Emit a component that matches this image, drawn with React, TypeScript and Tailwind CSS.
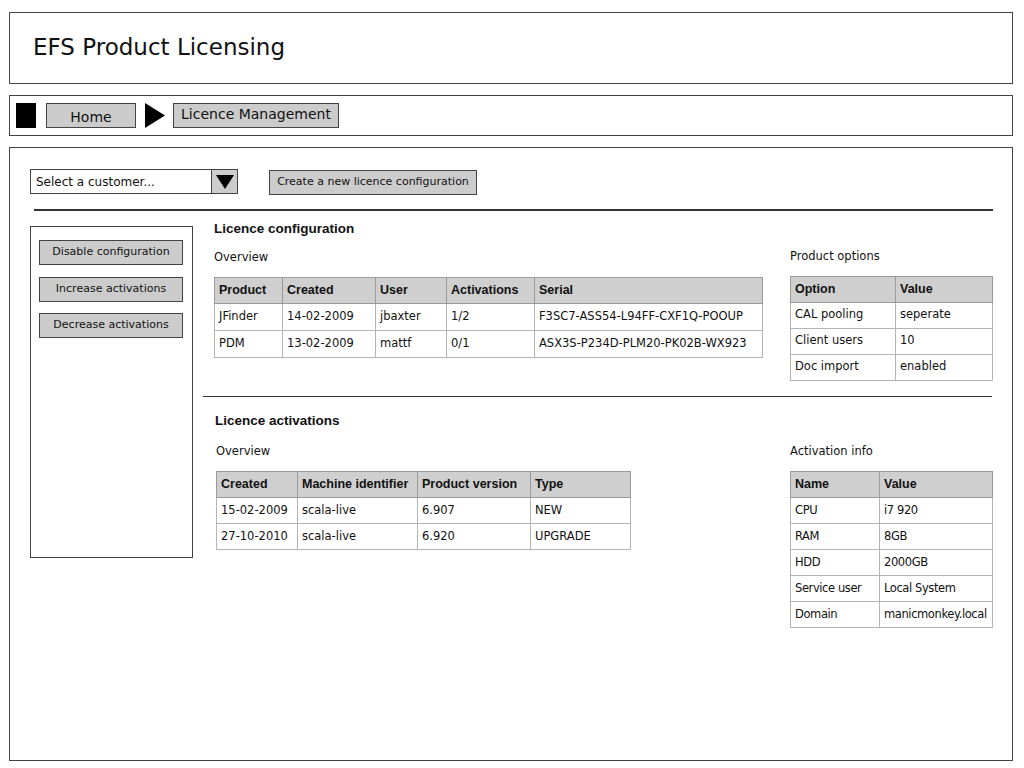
import React from "react";

const font = { fontFamily: '"DejaVu Sans", "Liberation Sans", sans-serif' };
const boldFont = { fontFamily: '"Liberation Sans", Arial, sans-serif' };

type TableProps = {
  widths: number[];
  header: string[];
  rows: string[][];
  headH?: number;
  rowH?: number;
  tight?: boolean;
};

function DataTable({ widths, header, rows, headH = 26, rowH = 26, tight = false }: TableProps) {
  return (
    <table className="border-collapse table-fixed text-[11.5px] text-[#111]" style={{ width: widths.reduce((a, b) => a + b, 0) }}>
      <colgroup>
        {widths.map((w, i) => (
          <col key={i} style={{ width: w }} />
        ))}
      </colgroup>
      <thead>
        <tr style={{ height: headH }} className="bg-[#cfcfcf]">
          {header.map((h, i) => (
            <th
              key={i}
              style={boldFont}
              className="border border-[#9a9a9a] text-left font-bold text-[12.5px] px-[4px] py-0 whitespace-nowrap"
            >
              {h}
            </th>
          ))}
        </tr>
      </thead>
      <tbody>
        {rows.map((r, ri) => (
          <tr key={ri} style={{ height: rowH }}>
            {r.map((c, ci) => (
              <td
                key={ci}
                className={`border border-[#b4b4b4] px-[4px] py-0 whitespace-nowrap ${tight ? "tracking-[-0.4px]" : ""}`}
              >
                {c}
              </td>
            ))}
          </tr>
        ))}
      </tbody>
    </table>
  );
}

function GrayButton({ children, className = "" }: { children: React.ReactNode; className?: string }) {
  return (
    <div className={`bg-[#cccccc] border-[1.5px] border-[#444] flex items-center justify-center text-[11px] text-[#111] whitespace-nowrap ${className}`}>
      {children}
    </div>
  );
}

export default function App() {
  return (
    <div className="w-[1024px] h-[768px] bg-white overflow-hidden text-[#111]" style={font}>
      <div className="flex flex-col pt-[12px] pl-[9px]">
        {/* Header */}
        <div className="w-[1004px] h-[72px] border-[1.5px] border-[#444] flex items-center pl-[23px]">
          <span className="text-[23px] leading-none pb-[1px]">EFS Product Licensing</span>
        </div>

        {/* Breadcrumb */}
        <div className="mt-[11px] w-[1004px] h-[41px] border-[1.5px] border-[#444] flex items-center pl-[6px]">
          <div className="w-[20px] h-[25px] bg-black" />
          <GrayButton className="ml-[10px] w-[90px] h-[25px] text-[14px] pt-[3px]">Home</GrayButton>
          <svg width="20" height="25" viewBox="0 0 20 25" className="ml-[9px]">
            <polygon points="0,0 20,12.5 0,25" fill="#000" />
          </svg>
          <GrayButton className="ml-[8px] w-[166px] h-[25px] text-[14px] items-start pb-[4px]">Licence Management</GrayButton>
        </div>

        {/* Main */}
        <div className="mt-[11px] w-[1004px] h-[614px] border-[1.5px] border-[#444] flex flex-col">
          {/* Top controls */}
          <div className="flex items-start mt-[21px] ml-[20px]">
            <div className="w-[208px] h-[25px] border-[1.5px] border-[#444] flex items-stretch">
              <div className="flex-1 flex items-center pl-[5px] text-[12px]">Select a customer...</div>
              <div className="w-[26px] bg-[#cccccc] border-l-[1.5px] border-[#444] flex items-center justify-center">
                <svg width="18" height="14" viewBox="0 0 18 14">
                  <polygon points="0,0 18,0 9,14" fill="#000" />
                </svg>
              </div>
            </div>
            <GrayButton className="ml-[31px] mt-[1px] w-[208px] h-[25px]">Create a new licence configuration</GrayButton>
          </div>

          {/* Divider */}
          <div className="ml-[24px] mt-[14px] w-[959px] h-[1.5px] bg-[#333]" />

          {/* Lower area */}
          <div className="flex items-start">
            {/* Left panel */}
            <div className="ml-[20px] mt-[15px] w-[163px] h-[332px] border-[1.5px] border-[#444] flex flex-col pl-[8px] pt-[13px]">
              <GrayButton className="w-[144px] h-[25px]">Disable configuration</GrayButton>
              <GrayButton className="w-[144px] h-[25px] mt-[12px]">Increase activations</GrayButton>
              <GrayButton className="w-[144px] h-[25px] mt-[11px]">Decrease activations</GrayButton>
            </div>

            {/* Right content */}
            <div className="ml-[10px] w-[790px] flex flex-col">
              {/* Licence configuration */}
              <div className="flex pl-[11px] pt-[9px]">
                <div className="flex flex-col">
                  <div style={boldFont} className="text-[13.5px] font-bold h-[18px] leading-[18px]">Licence configuration</div>
                  <div className="text-[11.5px] mt-[11px] h-[16px] leading-[16px]">Overview</div>
                  <div className="mt-[12px]">
                    <DataTable
                      widths={[68, 93, 71, 88, 228]}
                      header={["Product", "Created", "User", "Activations", "Serial"]}
                      rows={[
                        ["JFinder", "14-02-2009", "jbaxter", "1/2", "F3SC7-ASS54-L94FF-CXF1Q-POOUP"],
                        ["PDM", "13-02-2009", "mattf", "0/1", "ASX3S-P234D-PLM20-PK02B-WX923"],
                      ]}
                      rowH={27}
                    />
                  </div>
                </div>
                <div className="flex flex-col ml-[27px] pt-[28px]">
                  <div className="text-[11.5px] h-[16px] leading-[16px]">Product options</div>
                  <div className="mt-[12px]">
                    <DataTable
                      widths={[105, 97]}
                      header={["Option", "Value"]}
                      rows={[
                        ["CAL pooling", "seperate"],
                        ["Client users", "10"],
                        ["Doc import", "enabled"],
                      ]}
                    />
                  </div>
                </div>
              </div>

              {/* Divider 2 */}
              <div className="mt-[15px] w-[789px] h-[1.5px] bg-[#333]" />

              {/* Licence activations */}
              <div className="flex pl-[12px] pt-[15px]">
                <div className="flex flex-col w-[574px]">
                  <div style={boldFont} className="text-[13.5px] font-bold h-[18px] leading-[18px]">Licence activations</div>
                  <div className="text-[11.5px] mt-[13px] h-[16px] leading-[16px] pl-[1px]">Overview</div>
                  <div className="mt-[12px] pl-[1px]">
                    <DataTable
                      widths={[81, 120, 113, 100]}
                      header={["Created", "Machine identifier", "Product version", "Type"]}
                      rows={[
                        ["15-02-2009", "scala-live", "6.907", "NEW"],
                        ["27-10-2010", "scala-live", "6.920", "UPGRADE"],
                      ]}
                    />
                  </div>
                </div>
                <div className="flex flex-col pt-[31px] ml-[1px]">
                  <div className="text-[11.5px] h-[16px] leading-[16px]">Activation info</div>
                  <div className="mt-[12px]">
                    <DataTable
                      widths={[89, 113]}
                      header={["Name", "Value"]}
                      tight
                      rows={[
                        ["CPU", "i7 920"],
                        ["RAM", "8GB"],
                        ["HDD", "2000GB"],
                        ["Service user", "Local System"],
                        ["Domain", "manicmonkey.local"],
                      ]}
                    />
                  </div>
                </div>
              </div>
            </div>
          </div>
        </div>
      </div>
    </div>
  );
}
